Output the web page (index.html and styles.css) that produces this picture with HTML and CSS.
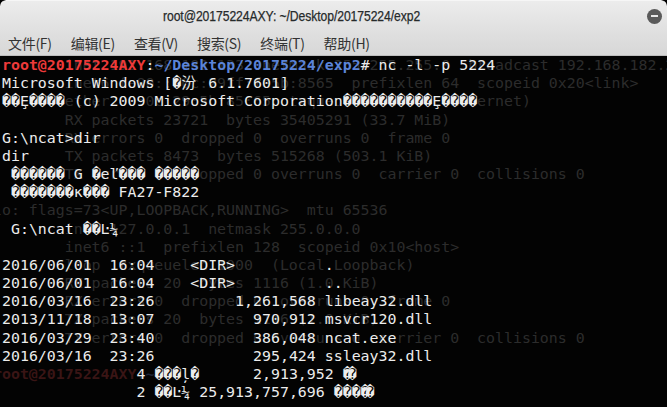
FILE: index.html
```html
<!DOCTYPE html>
<html lang="zh-CN">
<head>
<meta charset="utf-8">
<title>root@20175224AXY: ~/Desktop/20175224/exp2</title>
<link rel="stylesheet" href="styles.css">
</head>
<body>
<div class="window">
  <header class="titlebar">
    <span class="title">root@20175224AXY: ~/Desktop/20175224/exp2</span>
    <span class="close" aria-label="close"></span>
  </header>
  <nav class="menubar">
    <span class="menu">文件(F)</span>
    <span class="menu">编辑(E)</span>
    <span class="menu">查看(V)</span>
    <span class="menu">搜索(S)</span>
    <span class="menu">终端(T)</span>
    <span class="menu">帮助(H)</span>
  </nav>
  <div class="term">
<pre class="ghost">        inet 192.168.182.133  netmask 255.255.255.0  broadcast 192.168.182.255
        inet6 fe80::20c:29ff:fe5b:8565  prefixlen 64  scopeid 0x20&lt;link&gt;
        ether 00:0c:29:5b:85:65  txqueuelen 1000  (Ethernet)
        RX packets 23721  bytes 35405291 (33.7 MiB)
        RX errors 0  dropped 0  overruns 0  frame 0
        TX packets 8473  bytes 515268 (503.1 KiB)
        TX errors 0  dropped 0 overruns 0  carrier 0  collisions 0

lo: flags=73&lt;UP,LOOPBACK,RUNNING&gt;  mtu 65536
        inet 127.0.0.1  netmask 255.0.0.0
        inet6 ::1  prefixlen 128  scopeid 0x10&lt;host&gt;
        loop  txqueuelen 1000  (Local Loopback)
        RX packets 20  bytes 1116 (1.0 KiB)
        RX errors 0  dropped 0  overruns 0  frame 0
        TX packets 20  bytes 1116 (1.0 KiB)
        TX errors 0  dropped 0 overruns 0  carrier 0  collisions 0

<span class="g-red">root@20175224AXY</span>:<span class="g-blue">~</span># </pre>
<pre class="out"><span class="p-user">root@20175224AXY</span>:<span class="p-path">~/Desktop/20175224/exp2</span># nc -l -p 5224
Microsoft Windows [�<span class="w2">汾</span> 6.1.7601]
��Ȩ���� (c) 2009 Microsoft Corporation����������Ȩ����

G:\ncat&gt;dir
dir
 ������ G �eľ��� �����
 �������к��� FA27-F822

 G:\ncat ��Ŀ¼

2016/06/01  16:04    &lt;DIR&gt;          .
2016/06/01  16:04    &lt;DIR&gt;          ..
2016/03/16  23:26         1,261,568 libeay32.dll
2013/11/18  13:07           970,912 msvcr120.dll
2016/03/29  23:40           386,048 ncat.exe
2016/03/16  23:26           295,424 ssleay32.dll
               4 ���ļ�      2,913,952 �<span class="ov">�</span>
               2 ��Ŀ¼ 25,913,757,696 ����<span class="ov">�</span></pre>
  </div>
</div>
</body>
</html>
```

FILE: styles.css
```css
html, body {
  margin: 0;
  padding: 0;
  background: #000;
}

.window {
  width: 667px;
  height: 407px;
  display: flex;
  flex-direction: column;
  overflow: hidden;
  border-radius: 6px 6px 0 0;
  background: #000;
}

.titlebar {
  height: 31px;
  flex: none;
  display: flex;
  align-items: center;
  padding-left: 163px;
  padding-right: 5px;
  background: linear-gradient(#ececec, #e0e0e0);
  border-top: 1px solid #f6f6f6;
  box-sizing: border-box;
  border-radius: 6px 6px 0 0;
}

.title {
  flex: 1;
  font-family: "Liberation Sans", "DejaVu Sans", sans-serif;
  font-size: 14.5px;
  color: #262a2b;
  letter-spacing: -0.1px;
  -webkit-text-stroke: 0.25px #262a2b;
  transform: scaleX(0.84);
  transform-origin: left center;
  white-space: nowrap;
}

.close {
  width: 15px;
  height: 15px;
  border-radius: 50%;
  background: #5a5a5a;
  position: relative;
}

.close::after {
  content: "";
  position: absolute;
  left: 4px;
  top: 6.5px;
  width: 7px;
  height: 2px;
  background: #e8e8e8;
}

.menubar {
  height: 24px;
  flex: none;
  display: flex;
  align-items: center;
  gap: 19px;
  padding-left: 8px;
  background: linear-gradient(#e0e0e0, #d7d7d7);
  border-bottom: 1px solid #bdbdbd;
}

.menu {
  font-family: "Noto Sans CJK SC", "DejaVu Sans", sans-serif;
  font-size: 14px;
  color: #333;
  line-height: 20px;
  letter-spacing: -0.3px;
}

.term {
  flex: 1;
  position: relative;
  background: #030303;
  overflow: hidden;
}

.term pre {
  margin: 0;
  font-family: "DejaVu Sans Mono", "Noto Sans CJK SC", monospace;
  font-size: 14.9px;
  line-height: 18.17px;
  white-space: pre;
}

.ghost {
  position: absolute;
  left: -7px;
  top: 0;
  color: #2c2c2c;
}

.g-red {
  color: #3a1515;
  font-weight: bold;
}

.g-blue {
  color: #1c2438;
  font-weight: bold;
}

.out {
  position: relative;
  padding-left: 2px;
  color: #ececec;
}

.p-user {
  color: #ee3a3a;
  font-weight: bold;
}

.p-path {
  color: #5b84d8;
  font-weight: bold;
}

.w2 {
  display: inline-block;
  width: 2ch;
}

.ov {
  margin-left: -4px;
}
```
